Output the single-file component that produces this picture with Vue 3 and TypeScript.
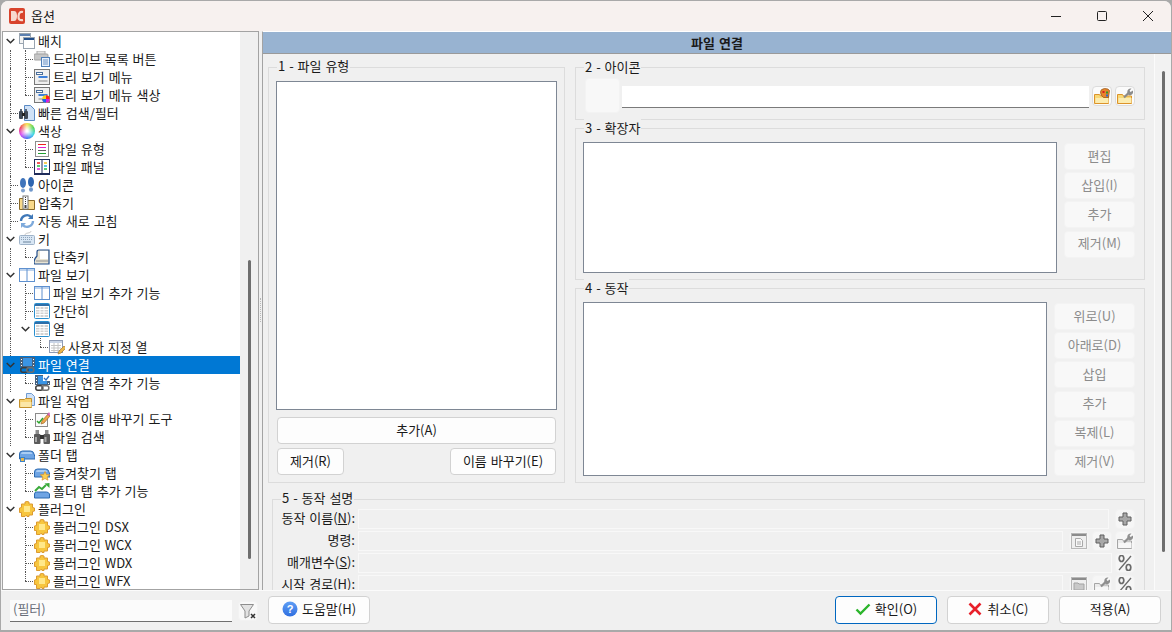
<script setup lang="ts">
type Row = { d: number; label: string; icon: string; open?: boolean; sel?: boolean };

const folder = (s = '#f9d977', e = '#dc932a') =>
  `<path d="M.5 15.500V6.500h5l1 1.500h8v7.500z" fill="${s}" stroke="${e}"/><path d="M1.500 10h13v5h-13z" fill="#fcecb0"/>`;
const puzzle = `<path d="M6 3V1l2-.5L10 1v2h3.500v3.500l2 .5v3l-2 .5v3.500H10v1.500H8l-.5-1.500-1.500 1.500H2.500v-4H.5V7l2-.5V3z" fill="#f7c63e" stroke="#dc9a30"/><path d="M5 5h6v6H5z" fill="#ffe88a"/>`;
const filmLink = `<rect x="1" y="0" width="15" height="10" fill="#47627f"/><rect x="4" y="1" width="9" height="8" fill="#3a94e4"/><path d="M2 2h1v1H2zM2 5h1v1H2zM2 8h1v1H2zM14 2h1v1h-1zM14 5h1v1h-1zM14 8h1v1h-1z" fill="#fff"/><rect x="1.800" y="10.800" width="7" height="4.400" rx="2" fill="none" stroke="#3c3c3c" stroke-width="1.500"/><rect x="7.800" y="10.800" width="7" height="4.400" rx="2" fill="none" stroke="#6d6d6d" stroke-width="1.500"/>`;
const panes = `<rect x=".5" y="1.500" width="15" height="13" fill="#fff" stroke="#5e90cf"/><rect x="1" y="2" width="14" height="2" fill="#bdd3ee"/><path d="M8 2v12" stroke="#5e90cf"/>`;
const table = `<rect x=".5" y=".5" width="15" height="15" rx="1" fill="#fff" stroke="#2a8fcf"/><rect x="1" y="1" width="14" height="2" fill="#2f6ea8"/><path d="M2 4h12v10H2z" fill="#d2d2d2"/><path d="M2 6.500h12M2 9h12M2 11.500h12M6 4v10M10 4v10" stroke="#fff"/>`;
const tab = `<path d="M.5 12V7q0-3 3-3h8q3 0 3.500 3l1 3v2z" fill="#6ea4e4" stroke="#2d6bb0"/><path d="M2 7q0-2 2-2h7q2 0 2.500 2z" fill="#a9cdf4"/>`;
const treeMenu = `<rect x=".5" y=".5" width="15" height="15" fill="#efefef" stroke="#777"/><rect x="2.500" y="3.500" width="6" height="2" fill="#fff" stroke="#4b6f9c"/><rect x="4.500" y="7" width="9" height="2" fill="#3d80da"/><rect x="4.500" y="11" width="9" height="2" fill="#bdbdbd"/>`;
const tool = (c = '#8c8c8c') =>
  `<path d="M7 9.500l5-5" stroke="${c}" stroke-width="2.200"/><path d="M10.500 5a3.500 3.500 0 0 1 4-4.500l-2 2.200 1 1.300L16 2.500A3.500 3.500 0 0 1 11.500 7z" fill="${c}"/>`;

const icons: Record<string, string> = {
  windows: `<rect x=".5" y=".5" width="11" height="10" fill="#f4f4f4" stroke="#9aa5b1"/><rect x="1" y="1" width="10" height="2" fill="#5b7fb0"/><rect x="4.500" y="4.500" width="11" height="11" fill="#fff" stroke="#9aa5b1"/><rect x="5" y="5" width="10" height="2" fill="#234f8c"/>`,
  printer: `<rect x="3" y="0" width="8" height="4" fill="#e4e4e4" stroke="#aaa"/><rect x="0" y="3" width="14" height="6" rx="1" fill="#c6c6c6" stroke="#a2a2a2"/><rect x="7.500" y="6.500" width="8" height="9" fill="#e7effa" stroke="#4f7fb8"/><path d="M9 9h5M9 11h5M9 13h5" stroke="#6d93c4"/>`,
  treeMenu,
  treeColor: `${treeMenu}<circle cx="12" cy="12" r="3.800" fill="#f0d020"/><path d="M12 12V8.200a3.800 3.800 0 0 1 3.800 3.800z" fill="#f22"/><path d="M12 12h3.800a3.800 3.800 0 0 1-3.800 3.800z" fill="#d020e0"/><path d="M12 12v3.800A3.800 3.800 0 0 1 8.200 12z" fill="#2060f0"/>`,
  searchDoc: `<path d="M5.500.5h6l4 4v11h-10z" fill="#cfe1f7" stroke="#5b8bc5"/><rect x="0" y="6" width="4" height="8" rx="1" fill="#3f4a58"/><rect x="5" y="6" width="4" height="8" rx="1" fill="#3f4a58"/><rect x="3" y="8" width="3" height="3" fill="#222"/><rect x="1" y="4" width="2" height="2" fill="#586575"/><rect x="6" y="4" width="2" height="2" fill="#586575"/>`,
  lines: `<rect x="1.500" y=".5" width="13" height="15" fill="#fff" stroke="#8d8d8d"/><path d="M4 3.500h8" stroke="#f02020"/><path d="M4 6.500h8" stroke="#e020d0"/><path d="M4 9.500h8" stroke="#606060"/><path d="M4 12.500h8" stroke="#20a030"/>`,
  panel: `<rect x=".5" y=".5" width="15" height="15" fill="#fff" stroke="#1f2c5a"/><rect x="1" y="14" width="14" height="1" fill="#1f2c5a"/><path d="M8 1v13" stroke="#1f2c5a"/><path d="M3 4h3" stroke="#f02020" stroke-width="1.400"/><path d="M3 7h3" stroke="#20c040" stroke-width="1.400"/><path d="M3 10h3" stroke="#e020d0" stroke-width="1.400"/><path d="M10 4h3" stroke="#f0c020" stroke-width="1.400"/><path d="M10 7h3" stroke="#20b0e0" stroke-width="1.400"/><path d="M10 10h3" stroke="#20c040" stroke-width="1.400"/>`,
  feet: `<ellipse cx="4" cy="6" rx="3" ry="5" fill="#3f74bb"/><ellipse cx="4" cy="13.500" rx="2" ry="2" fill="#7fa2cf"/><ellipse cx="12" cy="5" rx="3" ry="5" fill="#2d65b0"/><ellipse cx="12" cy="12.500" rx="2" ry="2.200" fill="#6f97cb"/>`,
  zip: `<path d="M.5 14.500V3.500h5l1 2h9v9z" fill="#f8d98a" stroke="#8a6a28"/><rect x="4" y="1" width="5" height="13" fill="#fff" stroke="#777"/><path d="M6.500 2v9" stroke="#333" stroke-dasharray="1 1"/><rect x="5.500" y="10" width="2" height="3" fill="#444"/>`,
  refresh: `<path d="M2 8a6 6 0 0 1 10.500-3.800" fill="none" stroke="#3f78b8" stroke-width="2.400"/><path d="M14 1v5h-5z" fill="#3f78b8"/><path d="M14 8a6 6 0 0 1-10.500 3.800" fill="none" stroke="#7eaadb" stroke-width="2.400"/><path d="M2 15v-5h5z" fill="#7eaadb"/>`,
  keyboard: `<rect x=".5" y="4.500" width="15" height="9" rx="1" fill="#d8e6f4" stroke="#9fb3c9"/><path d="M2 6.500h12M2 8.500h12" stroke="#8fa4ba" stroke-dasharray="1 1"/><path d="M4 11h8" stroke="#8fa4ba" stroke-width="1.500"/><path d="M6 4c0-3 6-1 6-4" fill="none" stroke="#c8c8c8"/>`,
  shortcut: `<path d="M3 7V3q0-2 2-2h10v14H1q-1 0-1-2 0-3 3-6z" fill="#e9e4d4" stroke="#234f8c" stroke-width="1.200"/><path d="M6 2h8v8H6z" fill="#fff"/><path d="M2 12h12" stroke="#8e8e8e"/>`,
  panes,
  table,
  tablePen: `<rect x=".5" y="1.500" width="13" height="12" fill="#fff" stroke="#8e9bb4"/><rect x="1" y="2" width="12" height="2" fill="#c9d4e6"/><path d="M2 6.500h10M2 9h10M2 11.500h10M5 4v9M9 4v9" stroke="#c4c4c4"/><path d="M9 15l1-3 5-5 2 2-5 5z" fill="#e8b64c" stroke="#a9782a" stroke-width=".7"/>`,
  filmLink,
  filmCheck: `${filmLink}<rect x="9" y="0" width="7" height="6" fill="#fff"/><path d="M10 3l2 2 3-4" fill="none" stroke="#2e6fc0" stroke-width="1.300"/>`,
  folderDoc: `<path d="M7.500.5h5l3 3v9h-8z" fill="#cfe1f7" stroke="#6f9bd1"/><path d="M.5 14.500v-8h5l1-1h6v9z" fill="#f7d272" stroke="#c3902c"/><path d="M1.500 9h11v5h-11z" fill="#fbe7a8"/>`,
  rename: `<rect x="1.500" y="2.500" width="12" height="13" fill="#fbfbfb" stroke="#8b8b8b"/><path d="M3 10l2 2 4-5" fill="none" stroke="#2aa52a" stroke-width="1.500"/><path d="M8 10l6-7 2 2-6 7-3 1z" fill="#f0a84c" stroke="#9c6a2a" stroke-width=".7"/><path d="M13 4l2-3 1 2-1 2z" fill="#d25ab0"/>`,
  binoculars: `<rect x="0" y="5" width="6.500" height="10" rx="1" fill="#5b5b5b"/><rect x="9.500" y="5" width="6.500" height="10" rx="1" fill="#5b5b5b"/><rect x="1.500" y="1" width="3.500" height="4" fill="#8c8c8c"/><rect x="11" y="1" width="3.500" height="4" fill="#8c8c8c"/><rect x="6" y="6" width="4" height="4" fill="#333"/><rect x="1" y="8" width="2" height="5" fill="#a8a8a8"/><rect x="10.500" y="8" width="2" height="5" fill="#a8a8a8"/>`,
  tab: `${tab}<path d="M1 12h5v-1H1z" fill="#2d6bb0"/><rect x="1" y="10" width="5" height="5" fill="#3c82c8"/><path d="M2 11h3v3H2z" fill="#e9b84c"/>`,
  tabStar: `${tab}<path d="M11 6.500l1.400 3 3.300.3-2.500 2.200.8 3.200-3-1.700-3 1.700.8-3.200-2.500-2.200 3.300-.3z" fill="#f9cf55" stroke="#d9922a" stroke-width=".7"/>`,
  tabUp: `<path d="M.5 15v-4q0-2 2-2h10q2 0 3 2v4z" fill="#6ea4e4" stroke="#2d6bb0"/><path d="M1 8l4-4 3 2 4-4" fill="none" stroke="#3aaa3a" stroke-width="2"/><path d="M15.500 0v5l-5-4.500z" fill="#3aaa3a"/>`,
  puzzle,
  folderPalette: `${folder()}<path d="M6.500 4q0-3 4-3.500 4 0 5 2l-1 7h-5q-3-2-3-5.500z" fill="#e8852c" stroke="#9a5a1c" stroke-width=".8"/><rect x="8.500" y="3" width="2" height="2" fill="#d62020"/><rect x="12" y="3.500" width="2" height="2" fill="#2a9a2a"/><rect x="12" y="6.500" width="2" height="2" fill="#2a6ad6"/>`,
  folderTool: `${folder()}${tool()}`,
  plus: `<path d="M6 2h4v4h4v4h-4v4H6v-4H2V6h4z" fill="#a8a8a8" stroke="#5e5e5e"/>`,
  docWin: `<rect x=".5" y=".5" width="15" height="15" fill="#efefef" stroke="#b8b8b8"/><rect x="1" y="1" width="14" height="2" fill="#8c8c8c"/><path d="M4.500 5.500h5l2 2v6h-7z" fill="#f8f8f8" stroke="#a9a9a9"/><path d="M6 9h4M6 11h4" stroke="#aaa"/>`,
  dirWin: `<rect x=".5" y=".5" width="15" height="15" fill="#efefef" stroke="#b8b8b8"/><rect x="1" y="1" width="14" height="2" fill="#8c8c8c"/><path d="M3 6h4l1 1h5v6H3z" fill="#c9c9c9" stroke="#a3a3a3"/>`,
  toolOff: `<path d="M.5 15.500V6.500h5l1 1.500h8v7.500z" fill="#ebebeb" stroke="#a5a5a5"/><path d="M1.500 10h13v5h-13z" fill="#f7f7f7"/>${tool('#8f8f8f')}`,
  percent: `<ellipse cx="4.500" cy="3.500" rx="2.300" ry="3" fill="none" stroke="#6a6a6a" stroke-width="1.700"/><ellipse cx="11.500" cy="12.500" rx="2.300" ry="3" fill="none" stroke="#6a6a6a" stroke-width="1.700"/><path d="M14 1L2 15" stroke="#6a6a6a" stroke-width="1.300"/>`,
  help: `<defs><linearGradient id="hb" x1="0" y1="0" x2="0" y2="1"><stop offset="0" stop-color="#5f9ef5"/><stop offset="1" stop-color="#2f6fe0"/></linearGradient></defs><circle cx="8" cy="8" r="7.500" fill="url(#hb)"/><text x="8" y="12" font-size="11" font-weight="700" text-anchor="middle" font-family="Liberation Sans" fill="#fff">?</text>`,
  check: `<path d="M1.500 8.500l4 4 9-9" fill="none" stroke="#2bb52b" stroke-width="2.400"/>`,
  cross: `<path d="M2.500 2.500l11 11M13.500 2.500l-11 11" fill="none" stroke="#e8202a" stroke-width="2.600"/>`,
  filterX: `<path d="M.5 1.500h13L9 8v5l-4 2V8z" fill="#e2e2e2" stroke="#8d8d8d"/><path d="M11 11l4 4M15 11l-4 4" stroke="#333" stroke-width="1.500"/>`,
};

const rows: Row[] = [
  { d: 0, label: '배치', icon: 'windows', open: true },
  { d: 1, label: '드라이브 목록 버튼', icon: 'printer' },
  { d: 1, label: '트리 보기 메뉴', icon: 'treeMenu' },
  { d: 1, label: '트리 보기 메뉴 색상', icon: 'treeColor' },
  { d: 0, label: '빠른 검색/필터', icon: 'searchDoc' },
  { d: 0, label: '색상', icon: 'wheel', open: true },
  { d: 1, label: '파일 유형', icon: 'lines' },
  { d: 1, label: '파일 패널', icon: 'panel' },
  { d: 0, label: '아이콘', icon: 'feet' },
  { d: 0, label: '압축기', icon: 'zip' },
  { d: 0, label: '자동 새로 고침', icon: 'refresh' },
  { d: 0, label: '키', icon: 'keyboard', open: true },
  { d: 1, label: '단축키', icon: 'shortcut' },
  { d: 0, label: '파일 보기', icon: 'panes', open: true },
  { d: 1, label: '파일 보기 추가 기능', icon: 'panes' },
  { d: 1, label: '간단히', icon: 'table' },
  { d: 1, label: '열', icon: 'table', open: true },
  { d: 2, label: '사용자 지정 열', icon: 'tablePen' },
  { d: 0, label: '파일 연결', icon: 'filmLink', open: true, sel: true },
  { d: 1, label: '파일 연결 추가 기능', icon: 'filmCheck' },
  { d: 0, label: '파일 작업', icon: 'folderDoc', open: true },
  { d: 1, label: '다중 이름 바꾸기 도구', icon: 'rename' },
  { d: 1, label: '파일 검색', icon: 'binoculars' },
  { d: 0, label: '폴더 탭', icon: 'tab', open: true },
  { d: 1, label: '즐겨찾기 탭', icon: 'tabStar' },
  { d: 1, label: '폴더 탭 추가 기능', icon: 'tabUp' },
  { d: 0, label: '플러그인', icon: 'puzzle', open: true },
  { d: 1, label: '플러그인 DSX', icon: 'puzzle' },
  { d: 1, label: '플러그인 WCX', icon: 'puzzle' },
  { d: 1, label: '플러그인 WDX', icon: 'puzzle' },
  { d: 1, label: '플러그인 WFX', icon: 'puzzle' },
];

function continues(i: number, level: number): boolean {
  for (let j = i + 1; j < rows.length; j++) {
    if (rows[j].d < level) return false;
    if (rows[j].d === level) return true;
  }
  return false;
}

const guideX = (level: number) => 7 + level * 15;

const treeRows = rows.map((r, i) => {
  const guides: { x: number; half: boolean }[] = [];
  for (let k = 0; k <= r.d; k++) {
    const more = continues(i, k);
    if (k < r.d && more) guides.push({ x: guideX(k), half: false });
    if (k === r.d && !r.open) guides.push({ x: guideX(k), half: !more });
  }
  return { ...r, guides, mark: guideX(r.d) };
});

const extButtons = ['편집', '삽입(I)', '추가', '제거(M)'];
const actionButtons = ['위로(U)', '아래로(D)', '삽입', '추가', '복제(L)', '제거(V)'];
</script>

<template>
  <div class="window">
    <header class="titlebar">
      <svg class="app" viewBox="0 0 16 16">
        <rect width="16" height="16" rx="2" fill="#d8432c" />
        <path d="M2 3h3q3 0 3 5t-3 5H2z" fill="#f7d9cf" />
        <path d="M14 4q-4-1-4.500 4T14 12" fill="none" stroke="#f7d9cf" stroke-width="2.200" />
      </svg>
      <span class="title-text">옵션</span>
      <div class="controls">
        <svg viewBox="0 0 10 10"><path d="M0 5.500h10" stroke="#222" /></svg>
        <svg viewBox="0 0 10 10"><rect x=".5" y=".5" width="9" height="9" rx="1" fill="none" stroke="#222" /></svg>
        <svg viewBox="0 0 10 10"><path d="M0 0l10 10M10 0L0 10" stroke="#222" /></svg>
      </div>
    </header>

    <div class="body">
      <aside class="tree">
        <ul class="tree-list">
          <li v-for="r in treeRows" :key="r.label" class="row" :class="['d' + r.d, { sel: r.sel }]">
            <i v-for="g in r.guides" :key="g.x" class="guide" :class="{ half: g.half }" :style="{ left: g.x + 'px' }"></i>
            <i v-if="!r.open" class="elbow" :style="{ left: r.mark + 'px' }"></i>
            <svg v-else class="chev" :style="{ left: r.mark - 4 + 'px' }" viewBox="0 0 9 6">
              <path d="M.7 1l3.800 3.800L8.300 1" fill="none" stroke="#333" stroke-width="1.500" />
            </svg>
            <span v-if="r.icon === 'wheel'" class="wheel"></span>
            <svg v-else class="ico" viewBox="0 0 16 16" v-html="icons[r.icon]"></svg>
            <span class="lbl">{{ r.label }}</span>
          </li>
        </ul>
        <div class="tree-lane"><div class="tree-thumb"></div></div>
      </aside>

      <div class="splitter"><i class="grip"></i></div>

      <main class="pane">
        <h1 class="pane-head">파일 연결</h1>
        <div class="pane-body">
          <div class="content">
            <div class="top">
              <section class="group g1">
                <span class="gt">1 - 파일 유형</span>
                <div class="list types"></div>
                <button class="btn wide">추가(A)</button>
                <div class="two">
                  <button class="btn rem">제거(R)</button>
                  <button class="btn ren">이름 바꾸기(E)</button>
                </div>
              </section>

              <div class="right">
                <section class="group g2">
                  <span class="gt">2 - 아이콘</span>
                  <div class="iconbox"></div>
                  <div class="input"></div>
                  <button class="sq" title="">
                    <svg class="ico" viewBox="0 0 16 16" v-html="icons.folderPalette"></svg>
                  </button>
                  <button class="sq">
                    <svg class="ico" viewBox="0 0 16 16" v-html="icons.folderTool"></svg>
                  </button>
                </section>

                <section class="group g3">
                  <span class="gt">3 - 확장자</span>
                  <div class="list grow"></div>
                  <div class="side ext">
                    <button v-for="b in extButtons" :key="b" class="btn off">{{ b }}</button>
                  </div>
                </section>

                <section class="group g4">
                  <span class="gt">4 - 동작</span>
                  <div class="list grow"></div>
                  <div class="side act">
                    <button v-for="b in actionButtons" :key="b" class="btn off">{{ b }}</button>
                  </div>
                </section>
              </div>
            </div>

            <section class="group g5">
              <span class="gt">5 - 동작 설명</span>
              <div class="frow">
                <label>동작 이름(<u>N</u>):</label>
                <div class="field"></div>
                <button class="sq lead"><svg class="ico" viewBox="0 0 16 16" v-html="icons.plus"></svg></button>
              </div>
              <div class="frow">
                <label>명령:</label>
                <div class="field"></div>
                <button class="sq lead"><svg class="ico" viewBox="0 0 16 16" v-html="icons.docWin"></svg></button>
                <button class="sq"><svg class="ico" viewBox="0 0 16 16" v-html="icons.plus"></svg></button>
                <button class="sq"><svg class="ico" viewBox="0 0 16 16" v-html="icons.toolOff"></svg></button>
              </div>
              <div class="frow">
                <label>매개변수(<u>S</u>):</label>
                <div class="field"></div>
                <button class="sq"><svg class="ico" viewBox="0 0 16 16" v-html="icons.percent"></svg></button>
              </div>
              <div class="frow">
                <label>시작 경로(<u>H</u>):</label>
                <div class="field"></div>
                <button class="sq lead"><svg class="ico" viewBox="0 0 16 16" v-html="icons.dirWin"></svg></button>
                <button class="sq"><svg class="ico" viewBox="0 0 16 16" v-html="icons.toolOff"></svg></button>
                <button class="sq"><svg class="ico" viewBox="0 0 16 16" v-html="icons.percent"></svg></button>
              </div>
            </section>
          </div>
          <div class="pane-lane"><div class="pane-thumb"></div></div>
        </div>
      </main>
    </div>

    <footer class="footer">
      <div class="filter">(필터)</div>
      <button class="sq fbtn"><svg class="ico" viewBox="0 0 16 16" v-html="icons.filterX"></svg></button>
      <button class="btn act-btn help">
        <svg class="ico" viewBox="0 0 16 16" v-html="icons.help"></svg>도움말(H)
      </button>
      <span class="spacer"></span>
      <button class="btn act-btn ok">
        <svg class="ico" viewBox="0 0 16 16" v-html="icons.check"></svg>확인(O)
      </button>
      <button class="btn act-btn">
        <svg class="ico" viewBox="0 0 16 16" v-html="icons.cross"></svg>취소(C)
      </button>
      <button class="btn act-btn">적용(A)</button>
    </footer>
  </div>
</template>

<style>
html,
body {
  margin: 0;
  background: #a9a9a9;
  overflow: hidden;
}
</style>

<style scoped>
.window {
  width: 1170px;
  height: 629px;
  margin: 1px;
  background: #f0f0f0;
  border-radius: 7px 7px 0 0;
  overflow: hidden;
  display: flex;
  flex-direction: column;
  font: 13px/18px "Noto Sans CJK KR", "Noto Sans", sans-serif;
  word-spacing: 1px;
  color: #1a1a1a;
}
button {
  font: inherit;
  word-spacing: inherit;
  color: inherit;
  margin: 0;
  padding: 0;
  outline: none;
}
.titlebar {
  flex: none;
  box-sizing: border-box;
  height: 30px;
  background: #f7f1ef;
  display: flex;
  align-items: center;
  padding: 0 0 1px 8px;
}
.app {
  width: 16px;
  height: 16px;
  margin-right: 6px;
}
.title-text {
  font-size: 13px;
}
.controls {
  margin-left: auto;
  display: flex;
  gap: 36px;
  padding-right: 18px;
  align-items: center;
}
.controls svg {
  width: 10px;
  height: 10px;
}
.body {
  flex: none;
  height: 559px;
  display: flex;
  padding-left: 1px;
}
.tree {
  flex: none;
  width: 257px;
  box-sizing: border-box;
  border: 1px solid #a3a3a3;
  background: #fff;
  display: flex;
  overflow: hidden;
}
.tree-list {
  list-style: none;
  margin: 0;
  padding: 0;
  width: 237px;
  flex: none;
}
.row {
  position: relative;
  height: 18px;
  display: flex;
  align-items: center;
  white-space: nowrap;
}
.d0 {
  padding-left: 16px;
}
.d1 {
  padding-left: 31px;
}
.d2 {
  padding-left: 46px;
}
.sel {
  background: #0078d4;
  color: #fff;
}
.guide {
  position: absolute;
  top: 0;
  height: 18px;
  border-left: 1px dotted #555;
}
.guide.half {
  height: 9px;
}
.elbow {
  position: absolute;
  top: 9px;
  width: 8px;
  border-top: 1px dotted #555;
}
.chev {
  position: absolute;
  top: 6px;
  width: 9px;
  height: 6px;
}
.ico {
  flex: none;
  width: 16px;
  height: 16px;
  display: block;
}
.wheel {
  flex: none;
  width: 16px;
  height: 16px;
  border-radius: 50%;
  background:
    radial-gradient(circle, #fff 8%, rgba(255, 255, 255, 0) 70%),
    conic-gradient(#f6e13a, #43d14a, #2ad1e6, #3a63f0, #d43af0, #f0364e, #f6e13a);
}
.lbl {
  margin-left: 3px;
}
.tree-lane {
  flex: 1;
  background: #f0f0f0;
  padding-top: 228px;
}
.tree-thumb {
  width: 3px;
  height: 299px;
  margin-left: 8px;
  background: #6e6e6e;
  border-radius: 2px;
}
.splitter {
  flex: none;
  width: 3px;
  position: relative;
}
.grip {
  position: absolute;
  left: 1px;
  top: 267px;
  height: 24px;
  border-left: 1px dotted #b8b8b8;
}
.pane {
  flex: 1;
  min-width: 0;
  display: flex;
  flex-direction: column;
  border-left: 1px solid #a3a3a3;
  border-top: 1px solid #fff;
}
.pane-head {
  flex: none;
  margin: 0;
  height: 21px;
  background: #98b3d1;
  border-bottom: 1px solid #9a9a9a;
  text-align: center;
  font-size: 13px;
  font-weight: 700;
  line-height: 21px;
}
.pane-body {
  flex: 1;
  min-height: 0;
  display: flex;
  overflow: hidden;
}
.content {
  width: 891px;
  flex: none;
  box-sizing: border-box;
  padding: 13px 9px 0 5px;
}
.top {
  display: flex;
  gap: 10px;
}
.group {
  position: relative;
  box-sizing: border-box;
  border: 1px solid #dcdcdc;
}
.gt {
  position: absolute;
  left: 8px;
  top: -10px;
  padding: 0 1px;
  background: #f0f0f0;
  line-height: 18px;
}
.g1 > .gt,
.g5 > .gt {
  top: -11px;
}
.g1 {
  width: 297px;
  height: 416px;
  flex: none;
  padding: 13px 7px 0;
}
.list {
  box-sizing: border-box;
  background: #fff;
  border: 1px solid #7e8794;
}
.types {
  width: 281px;
  height: 329px;
}
.btn {
  box-sizing: border-box;
  height: 27px;
  padding-bottom: 2px;
  background: #fdfdfd;
  border: 1px solid #d2d2d2;
  border-radius: 4px;
  text-align: center;
}
.wide {
  display: block;
  width: 279px;
  margin: 7px 1px 4px;
}
.two {
  display: flex;
  justify-content: space-between;
  margin: 0 1px;
}
.rem {
  width: 67px;
}
.ren {
  width: 106px;
}
.right {
  flex: 1;
  display: flex;
  flex-direction: column;
  gap: 8px;
}
.g2 {
  height: 53px;
  flex: none;
  display: flex;
  align-items: flex-start;
  padding: 10px 9px 0;
}
.iconbox {
  width: 35px;
  height: 35px;
  flex: none;
  box-sizing: border-box;
  background: #f8f8f8;
  border: 1px solid #f3f3f3;
  border-radius: 4px;
  margin-right: 2px;
}
.input {
  flex: 1;
  height: 21px;
  margin-top: 8px;
  background: #fff;
  border-bottom: 1px solid #7a7a7a;
  margin-right: 3px;
}
.sq {
  flex: none;
  box-sizing: border-box;
  width: 20px;
  height: 20px;
  display: flex;
  align-items: center;
  justify-content: center;
  background: #f6f6f6;
  border: 1px solid #f2f2f2;
  border-radius: 4px;
}
.g2 .sq {
  margin-top: 8px;
  background: #fbfbfb;
  border-color: #dcdcdc;
}
.g2 .sq + .sq {
  margin-left: 3px;
}
.g3 {
  height: 152px;
  flex: none;
  display: flex;
  padding: 13px 9px 6px 7px;
  gap: 7px;
}
.g4 {
  flex: 1;
  display: flex;
  padding: 13px 9px 6px 7px;
  gap: 7px;
}
.grow {
  flex: 1;
}
.side {
  flex: none;
  display: flex;
  flex-direction: column;
  gap: 2.200px;
  padding-top: 1px;
}
.ext {
  width: 71px;
}
.act {
  width: 81px;
}
.off {
  background: #f8f8f8;
  border-color: #f3f3f3;
  color: #8c8c8c;
}
.g5 {
  margin: 16px 0 0 4px;
  height: 140px;
  padding: 9px 9px 0 0;
}
.frow {
  display: flex;
  align-items: center;
  height: 20px;
  margin-bottom: 2px;
}
.frow label {
  flex: none;
  width: 82px;
  text-align: right;
  white-space: nowrap;
  margin-right: 3px;
  padding-bottom: 2px;
}
.field {
  flex: 1;
  height: 20px;
  box-sizing: border-box;
  border: 1px solid #f8f8f8;
  margin-right: 3px;
}
.frow .sq + .sq {
  margin-left: 3px;
}
.frow .lead {
  margin-left: 3px;
}
.pane-lane {
  flex: 1;
  border-left: 1px solid #fbfbfb;
  padding: 17px 0 0 7px;
  background: #f2f2f2;
}
.pane-thumb {
  width: 3px;
  height: 481px;
  background: #6e6e6e;
  border-radius: 2px;
}
.footer {
  flex: none;
  height: 40px;
  box-sizing: border-box;
  border-top: 1px solid #fbfbfb;
  display: flex;
  align-items: flex-start;
  padding: 5px 10px 0 9px;
}
.filter {
  flex: none;
  width: 222px;
  height: 22px;
  margin-top: 4px;
  box-sizing: border-box;
  padding: 0 0 0 3px;
  background: #fbfbfb;
  border-bottom: 1px solid #6f6f6f;
  color: #6a6f7a;
}
.fbtn {
  margin: 5px 0 0 6px;
  background: #f8f8f8;
}
.act-btn {
  width: 102px;
  height: 28px;
  display: flex;
  align-items: center;
  justify-content: center;
}
.act-btn .ico {
  margin-right: 4px;
}
.help {
  margin-left: 10px;
}
.spacer {
  flex: 1;
}
.act-btn + .act-btn {
  margin-left: 10px;
}
.ok {
  border: 1.500px solid #0067c0;
}
</style>
